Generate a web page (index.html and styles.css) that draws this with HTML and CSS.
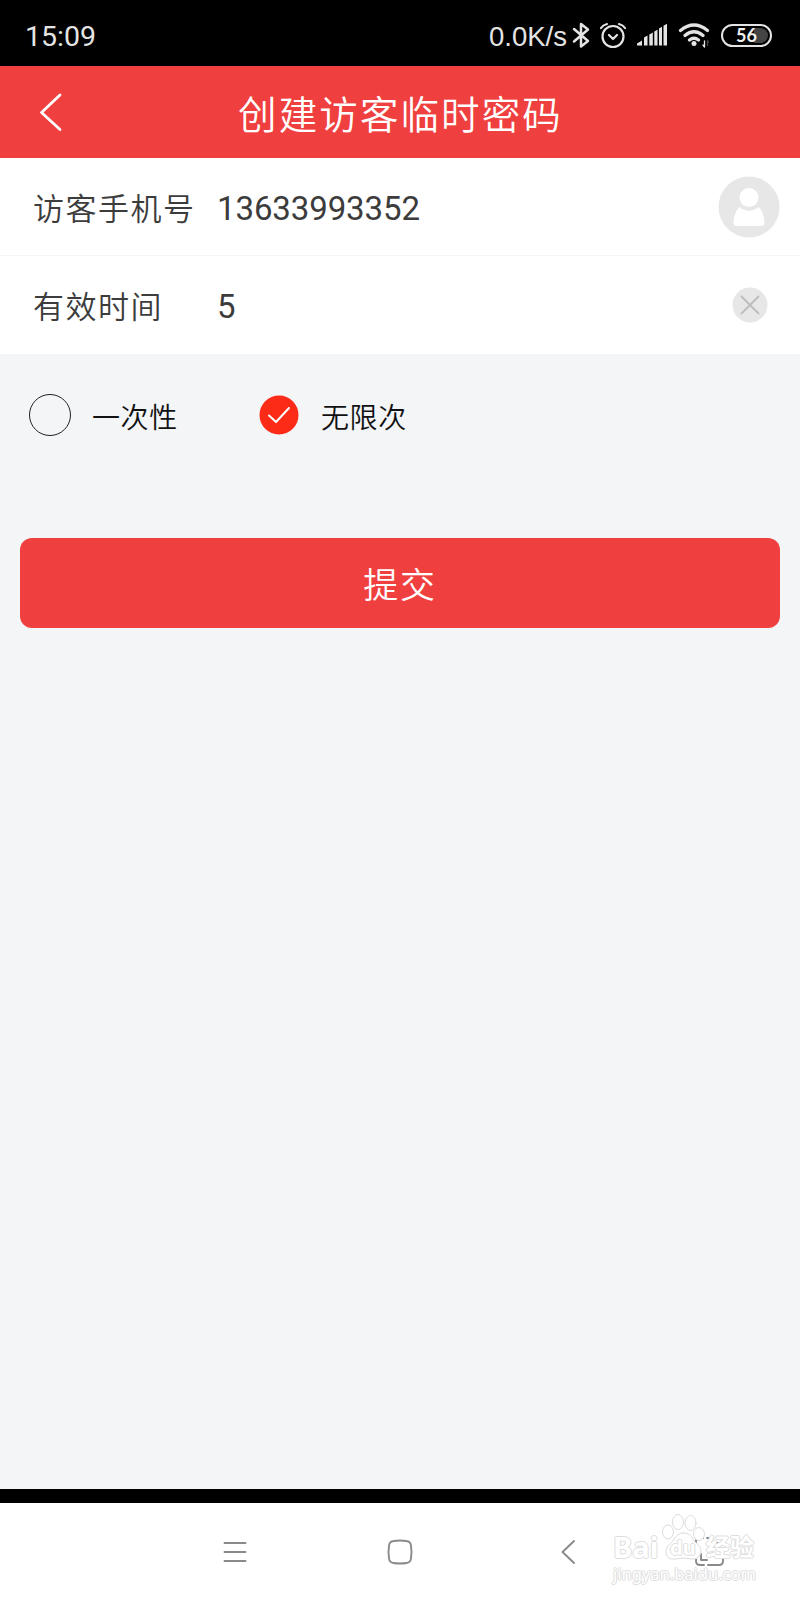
FILE: index.html
```
<!DOCTYPE html>
<html lang="zh-CN">
<head>
    <meta charset="UTF-8">
    <meta name="viewport" content="width=device-width, initial-scale=1.0">
    <link rel="stylesheet" href="styles.css">
    <title>创建访客临时密码</title>
</head>
<body>
    <div class="status-bar">
        <span class="time">15:09</span>
        <div class="status-icons">
            <span class="speed">0.0K/s</span>
            <svg class="bluetooth" width="18" height="28" viewBox="0 0 18 28">
                <path d="M2 8l14 12-7 5.500V3l7 5.500L2 20.500" />
            </svg>
            <svg class="alarm" width="28" height="28" viewBox="0 0 28 28">
                <circle cx="14" cy="15.5" r="10.5" />
                <path d="M10 14l4 4 4-4M2 7Q4 4 8 3M26 7Q24 4 20 3" />
            </svg>
            <svg class="signal" width="32" height="24" viewBox="0 0 32 24">
                <path d="M1 22.500v-2l5-3v5zM8 22.500v-8l3.500-2v10zM13.300 22.500v-11l3.500-2v13zM18.300 22.500V8.500l3.200-1.800v15.800zM23 22.500V5.500l3-1.700v18.700zM27.500 22.500V2.700l3.500-2v21.800z" />
            </svg>
            <svg class="wifi" width="34" height="28" viewBox="0 0 34 28">
                <path d="M2.500 9.500Q16-1.500 29.500 9.500M7 14.500Q16 7 25 14.500M11.500 19Q16 15.500 20.500 19" />
                <circle cx="16" cy="22.500" r="2.500" />
                <path class="thin" d="M26.500 20v6l-1.500-2" />
                <path class="thin dim" d="M29.500 24.500v-5l1 1.500" />
            </svg>
            <div class="battery"><span>56</span></div>
        </div>
    </div>

    <div class="header">
        <svg class="back" width="24" height="40" viewBox="0 0 24 40">
            <path d="M21 3L2.500 20.500 21 37.500" />
        </svg>
        <h1>创建访客临时密码</h1>
    </div>

    <div class="form">
        <div class="row">
            <label>访客手机号</label>
            <span class="value">13633993352</span>
            <svg class="avatar" width="62" height="62" viewBox="0 0 62 62">
                <circle cx="31" cy="31" r="30.500" fill="#e7e7e7" />
                <path d="M21.500 31Q16 36 15.500 46.500Q15.500 50 18.500 50H43.500Q46.500 50 46.500 46.500Q46 36 40.500 31Q31 38.500 21.500 31z" fill="#fff" />
                <circle cx="31" cy="21.500" r="9.500" fill="#fff" />
            </svg>
        </div>
        <div class="row">
            <label>有效时间</label>
            <span class="value">5</span>
            <svg class="clear" width="36" height="36" viewBox="0 0 36 36">
                <circle cx="18" cy="18" r="17.500" />
                <path d="M9.500 9.500l17 17M26.500 9.500l-17 17" />
            </svg>
        </div>
    </div>

    <div class="content">
        <div class="options">
            <div class="option">
                <span class="radio"></span>
                <span>一次性</span>
            </div>
            <div class="option">
                <svg class="radio-checked" width="42" height="42" viewBox="0 0 42 42">
                    <circle cx="21" cy="21" r="19.500" />
                    <path d="M11 21.500l7 6.500L31 14" />
                </svg>
                <span>无限次</span>
            </div>
        </div>
        <button type="button" class="submit">提交</button>
    </div>

    <div class="nav-bar">
        <svg class="nav-menu" width="24" height="24" viewBox="0 0 24 24">
            <path d="M1.500 3h21M1.500 12h21M1.500 21h21" />
        </svg>
        <svg class="nav-home" width="26" height="26" viewBox="0 0 26 26">
            <path d="M6.500 2Q13 1 19.500 2Q23.500 2.500 24 6.500Q25 13 24 19.500Q23.500 23.500 19.500 24Q13 25 6.500 24Q2.500 23.500 2 19.500Q1 13 2 6.500Q2.500 2.500 6.500 2z" />
        </svg>
        <svg class="nav-back" width="16" height="26" viewBox="0 0 16 26">
            <path d="M14 2L2.500 13 14 24" />
        </svg>
        <svg class="nav-shot" width="32" height="32" viewBox="0 0 32 32">
            <path d="M2 8V5q0-3 3-3h4M13 2h6M23 2h3q3 0 3 3v4M29 13v12q0 4-4 4H14M10 29H6q-4 0-4-4V13M7 18v6h6M18 7h6v6" />
        </svg>

        <div class="watermark">
            <svg class="paw" width="48" height="50" viewBox="0 0 48 50">
                <ellipse cx="8" cy="18" rx="5.500" ry="7" />
                <ellipse cx="18" cy="8" rx="5.500" ry="7.500" />
                <ellipse cx="30.500" cy="9" rx="5.500" ry="7.500" />
                <ellipse cx="39" cy="20" rx="5.500" ry="6.500" />
                <path d="M23 19Q30 18 34 27Q42 33 41 38Q39 46 32 45Q23 43 15 45Q7 46 6 39Q5 33 13 27Q17 19 23 19z" />
            </svg>
            <span class="mark-bai">Bai</span>
            <span class="mark-du">du</span>
            <span class="mark-jy">经验</span>
            <span class="mark-url">jingyan.baidu.com</span>
        </div>
    </div>
</body>
</html>
```
FILE: styles.css
```
* {
    box-sizing: border-box;
}

body {
    display: flex;
    flex-direction: column;
    width: 800px;
    height: 1600px;
    margin: 0;
    overflow: hidden;
    background-color: #f3f5f7;
    font-family: Roboto, "Noto Sans CJK SC", sans-serif;
    font-weight: 350;
}

svg {
    flex: none;
    fill: none;
    stroke-linecap: round;
    stroke-linejoin: round;
}

.status-bar {
    display: flex;
    justify-content: space-between;
    align-items: center;
    height: 66px;
    padding: 4px 28px 0 25px;
    background-color: #000;
    color: #e4e4e4;
}

.time {
    font-size: 28.500px;
    font-weight: 400;
    line-height: 32px;
    margin-top: 3px;
}

.status-icons {
    display: flex;
    align-items: center;
}

.speed {
    margin-top: 3px;
    font-family: "Liberation Sans", sans-serif;
    font-size: 27.500px;
    font-weight: 400;
    line-height: 32px;
}

.status-icons svg {
    stroke: #e4e4e4;
    stroke-width: 2.2;
}

.status-icons .bluetooth {
    margin-left: 5px;
    stroke-width: 2.5;
}

.alarm {
    margin-left: 9px;
}

.status-icons .signal {
    margin-left: 9px;
    fill: #e4e4e4;
    stroke: none;
}

.status-icons .wifi {
    margin-left: 10px;
    stroke-width: 3.2;
}

.wifi circle {
    fill: #e4e4e4;
    stroke: none;
}

.status-icons .wifi .thin {
    stroke-width: 1.3;
}

.status-icons .wifi .dim {
    stroke: #444;
}

.battery {
    width: 51px;
    height: 23px;
    margin-left: 9px;
    border: 2px solid #e4e4e4;
    border-radius: 12px;
    padding: 2px;
}

.battery span {
    display: block;
    height: 15px;
    border-radius: 8px;
    background: linear-gradient(to right, #000 68%, #444 68%);
    color: #f0f0f0;
    font-family: Lato, sans-serif;
    font-size: 18px;
    font-weight: 700;
    line-height: 15px;
    text-align: center;
}

.header {
    display: flex;
    align-items: center;
    height: 92px;
    padding-left: 39px;
    background-color: #f03f3f;
}

.back {
    stroke: #fff;
    stroke-width: 2.8;
}

h1 {
    flex: 1;
    margin: 0 62px 0 0;
    color: #fff;
    font-size: 38.500px;
    font-weight: 350;
    letter-spacing: 2.1px;
    text-align: center;
}

.form {
    background-color: #fff;
}

.row {
    display: flex;
    align-items: center;
    height: 98px;
    padding: 0 20px 0 33px;
    color: #3c3c3c;
    font-size: 31px;
}

.row:first-child {
    border-bottom: 1px solid #f5f5f5;
}

.row label {
    width: 184px;
    margin-bottom: 1px;
    letter-spacing: 1.5px;
}

.value {
    flex: 1;
    margin-top: 3px;
    font-size: 33px;
    font-weight: 400;
    letter-spacing: -0.1px;
}

.clear {
    margin-right: 12px;
}

.clear circle {
    fill: #e7e7e7;
}

.clear path {
    stroke: #bdbdbd;
    stroke-width: 1.8;
}

.content {
    flex: 1;
    padding: 39px 20px 0;
}

.options {
    display: flex;
    padding-left: 9px;
    color: #111;
    font-size: 28px;
    letter-spacing: 0.6px;
}

.option {
    display: flex;
    align-items: center;
    width: 229px;
    height: 44px;
}

.option span:last-child {
    margin: 1px 0 0 21px;
}

.radio {
    width: 42px;
    height: 42px;
    border: 1.500px solid #222;
    border-radius: 50%;
}

.radio-checked circle {
    fill: #fc2b18;
}

.radio-checked path {
    stroke: #fff;
    stroke-width: 2;
}

.submit {
    display: block;
    width: 760px;
    height: 90px;
    margin-top: 101px;
    padding: 0 0 1px;
    border: none;
    border-radius: 12px;
    background-color: #f03f3f;
    color: #fff;
    font-family: inherit;
    font-size: 35px;
    font-weight: 350;
    letter-spacing: 1.800px;
}

.nav-bar {
    position: relative;
    display: flex;
    align-items: center;
    height: 111px;
    padding: 0 73px 0 223px;
    border-top: 14px solid #000;
    background-color: #fff;
}

.nav-bar > svg {
    stroke: #8a8a8a;
    stroke-width: 1.9;
}

.nav-home {
    margin-left: 140px;
}

.nav-back {
    margin-left: 147px;
}

.nav-shot {
    margin-left: 118px;
}

/* outlined logo over the navigation bar */
.watermark {
    position: absolute;
    left: 613px;
    top: 10px;
    width: 146px;
    height: 76px;
    color: #fff;
    font-family: "Noto Sans", sans-serif;
    font-weight: 700;
    text-shadow: 1px 0 #dedede, -1px 0 #dedede, 0 1px #dedede, 0 -1px #dedede;
}

.watermark span,
.paw {
    position: absolute;
    white-space: nowrap;
    line-height: 1;
}

.paw {
    left: 47px;
    top: 1px;
    fill: #fff;
    stroke: #dcdcdc;
    stroke-width: 1;
}

.mark-bai {
    left: 0;
    top: 19px;
    font-size: 29px;
}

.mark-du {
    left: 57px;
    top: 25px;
    font-size: 20px;
}

.watermark .mark-jy {
    left: 93px;
    top: 21px;
    font-family: "Noto Sans CJK SC", sans-serif;
    font-size: 24px;
}

.watermark .mark-url {
    left: 0;
    top: 53px;
    font-size: 16.500px;
    font-weight: 400;
}
```
